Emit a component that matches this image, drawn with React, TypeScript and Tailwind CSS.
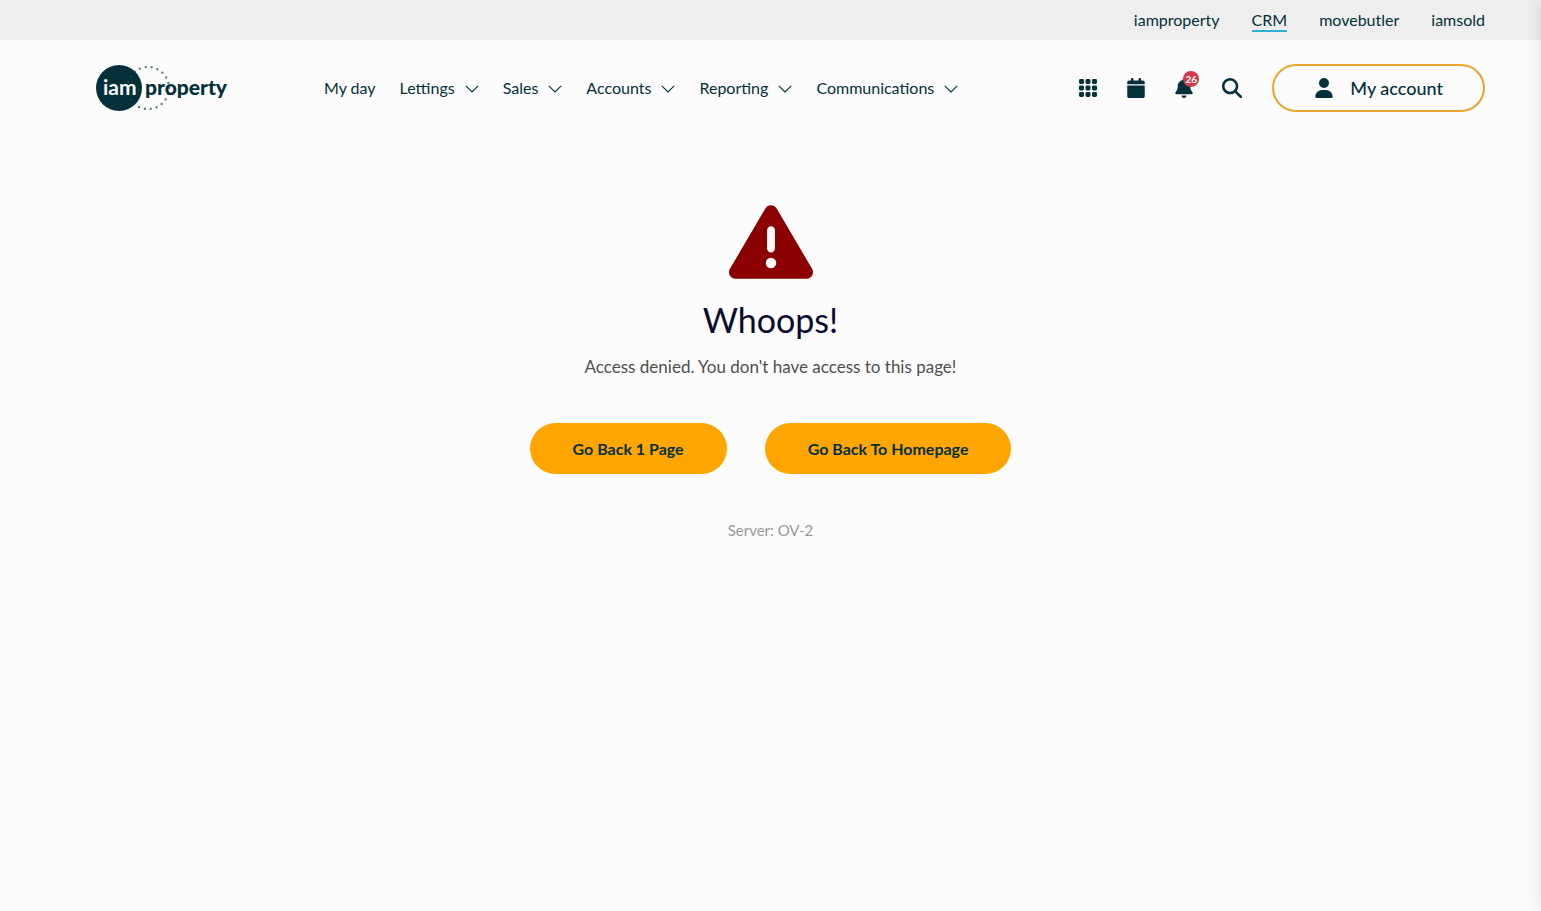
import { FaBell, FaCalendar, FaMagnifyingGlass, FaTriangleExclamation, FaUser } from 'react-icons/fa6';

const brands = [
  { name: 'iamproperty', active: false },
  { name: 'CRM', active: true },
  { name: 'movebutler', active: false },
  { name: 'iamsold', active: false },
];

const menus = ['Lettings', 'Sales', 'Accounts', 'Reporting', 'Communications'];

function Logo() {
  return (
    <svg width="132" height="48" viewBox="0 0 132 48" role="img" aria-label="iam property">
      <circle cx="52" cy="24" r="21" fill="none" stroke="#5d7c84" strokeWidth="2.4" strokeLinecap="round" strokeDasharray="0 6" />
      <circle cx="23" cy="24" r="23" fill="#03303b" />
      {/* Dots carry on faintly over the disc */}
      <path d="M39 8a21 21 0 0 0 0 32" fill="none" stroke="#2f5660" strokeWidth="1.4" strokeLinecap="round" strokeDasharray="0 6" />
      <text x="7" y="31" fontSize="21" fontWeight="700" fill="#fcfcfc">iam</text>
      <text x="49" y="31" fontSize="21" fontWeight="900" fill="#03303b">property</text>
    </svg>
  );
}

function Chevron() {
  return (
    <svg width="14" height="8" viewBox="0 0 14 8" fill="none" stroke="currentColor" strokeWidth="1.1" className="mt-0.5" aria-hidden="true">
      <path d="M0.8 0.8L7 7L13.2 0.8" />
    </svg>
  );
}

function GridIcon() {
  return (
    <svg width="18" height="18" viewBox="0 0 18 18" fill="currentColor" aria-hidden="true">
      {[0, 6.5, 13].map((y) =>
        [0, 6.5, 13].map((x) => <rect key={`${x}-${y}`} x={x} y={y} width="5" height="5" rx="1.4" />)
      )}
    </svg>
  );
}

export default function App() {
  return (
    <div className="min-h-screen overflow-x-hidden bg-[#fcfcfc] font-['Lato',sans-serif] text-[#03303b]">
      {/* Brand switcher */}
      <nav aria-label="Brands" className="flex h-10 items-center justify-end gap-8 bg-[#eeeeee] pr-14 text-[16px]">
        {brands.map((brand) => (
          <a
            key={brand.name}
            href="#"
            className={`border-y-2 border-t-transparent leading-5 ${brand.active ? 'border-b-[#31b0d5]' : 'border-b-transparent'}`}
          >
            {brand.name}
          </a>
        ))}
      </nav>

      <header className="flex h-24 items-center pr-14 pl-24">
        <a href="#" className="shrink-0">
          <Logo />
        </a>

        <nav aria-label="Main" className="ml-24 flex items-center gap-6 text-[16px]">
          <a href="#">My day</a>
          {menus.map((menu) => (
            <button key={menu} type="button" className="flex items-center gap-2.5">
              {menu}
              <Chevron />
            </button>
          ))}
        </nav>

        <div className="ml-auto flex items-center">
          <button type="button" aria-label="Apps" className="flex size-12 items-center justify-center">
            <GridIcon />
          </button>
          <button type="button" aria-label="Calendar" className="flex size-12 items-center justify-center">
            <FaCalendar size={20} />
          </button>
          <button type="button" aria-label="Notifications" className="relative flex size-12 items-center justify-center">
            <FaBell size={20} />
            <span className="absolute top-[7px] right-[9px] flex size-4 items-center justify-center rounded-full bg-[#d13a48] text-[10px] font-bold text-white">
              26
            </span>
          </button>
          <button type="button" aria-label="Search" className="flex size-12 items-center justify-center">
            <FaMagnifyingGlass size={20} />
          </button>
          <button
            type="button"
            className="ml-4 flex h-12 items-center gap-4 rounded-full border-2 border-[#eba52d] px-10 text-[18px] font-medium"
          >
            <FaUser size={20} />
            My account
          </button>
        </div>
      </header>

      <main className="flex flex-col items-center pt-16 text-center">
        <FaTriangleExclamation size={84} className="text-[#8b0000]" />
        <h1 className="mt-3 text-[34px] leading-12 text-[#0b0b30]">Whoops!</h1>
        <p className="mt-[11px] text-[17px] leading-6 text-[#4f4f4f]">Access denied. You don't have access to this page!</p>
        <div className="mt-11 flex gap-[38px]">
          <button type="button" className="h-[51px] rounded-full bg-[#ffa500] px-[43px] text-[16px] font-bold">
            Go Back 1 Page
          </button>
          <button type="button" className="h-[51px] rounded-full bg-[#ffa500] px-[43px] text-[16px] font-bold">
            Go Back To Homepage
          </button>
        </div>
        <p className="mt-11 text-[15px] leading-6 text-[#999999]">Server: OV-2</p>
      </main>

      {/* Closed drawer, only its shadow reaches the page */}
      <aside className="fixed inset-y-0 left-full w-80 shadow-[0_0_16px_rgba(0,0,0,0.12)]" />
    </div>
  );
}
